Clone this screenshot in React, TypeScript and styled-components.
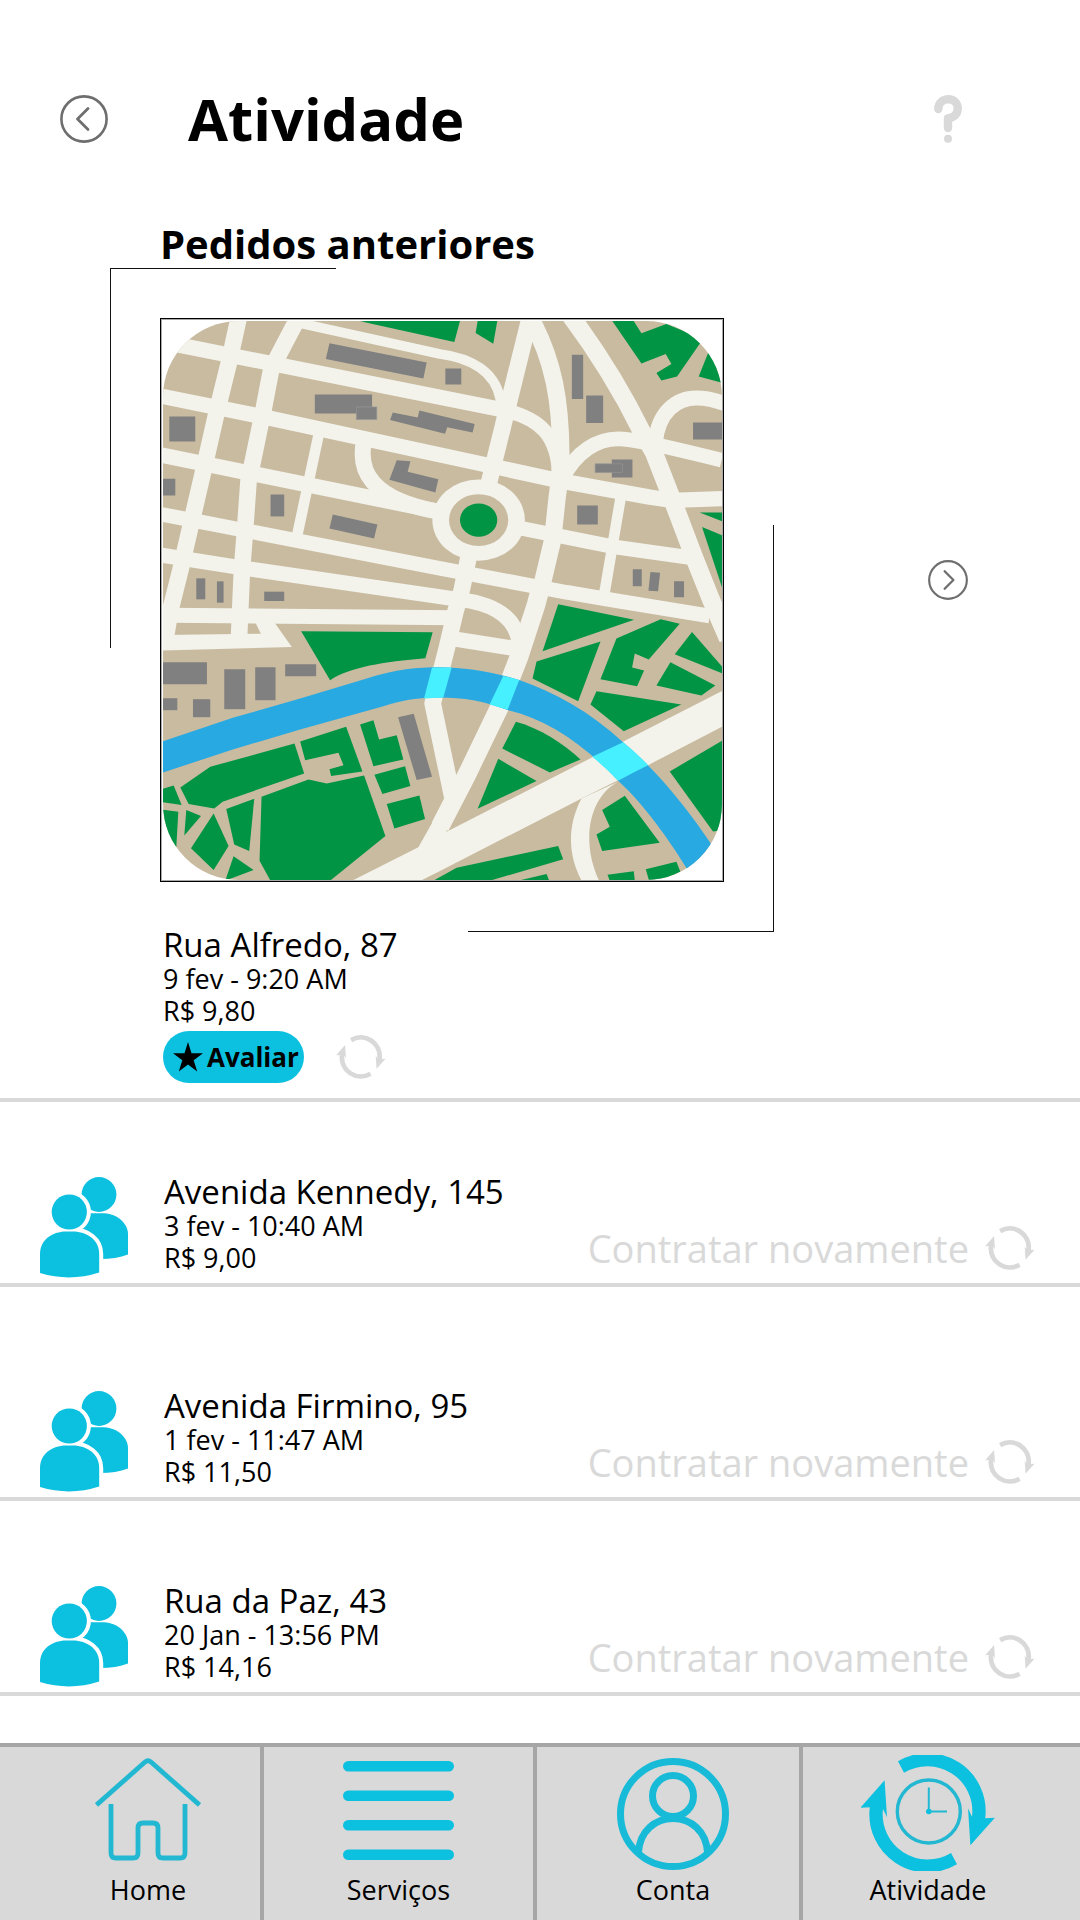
import React from "react";
import styled, { createGlobalStyle } from "styled-components";

const BRAND = "#0cc0df";
const MUTED = "#d9d9d9";

const GlobalStyle = createGlobalStyle`
  *, *::before, *::after { box-sizing: border-box; }
  body { margin: 0; background: #fff; color: #000; font-family: "Open Sans", "Noto Sans", sans-serif; }
  button { font: inherit; color: inherit; background: none; border: 0; padding: 0; cursor: pointer; }
  a { color: inherit; text-decoration: none; }
  h1, h2, h3, p, ul { margin: 0; padding: 0; }
  ul { list-style: none; }
  svg { display: block; flex: none; }
`;

const Screen = styled.div`
  display: flex;
  flex-direction: column;
  min-height: 100vh;
  background: #fff;
`;

const Header = styled.header`
  display: flex;
  align-items: center;
  gap: 80px;
  padding: 79px 118px 0 60px;
`;

const Title = styled.h1`
  flex: 1;
  font-size: 58px;
  line-height: 80px;
  font-weight: 700;
`;

const IconButton = styled.button`
  display: flex;
  flex: none;
`;

const Latest = styled.section`
  padding: 57px 112px 15px 160px;
  border-bottom: 4px solid ${MUTED};
`;

const SectionTitle = styled.h2`
  font-size: 40px;
  line-height: 56px;
  font-weight: 700;
`;

const MapRow = styled.div`
  display: flex;
  align-items: center;
  justify-content: space-between;
  gap: 80px;
  margin: 46px 0 45px;
`;

const MapFrame = styled.div`
  position: relative;
  flex: 0 1 564px;
  border: 1px solid #000;
  padding: 2px 1px 1px 2px;
  box-shadow: inset 0 0 0 1px #a8a8a8;

  &::before,
  &::after {
    content: "";
    position: absolute;
    border: 0 solid #111;
    pointer-events: none;
  }
  &::before {
    top: -51px;
    left: -51px;
    width: 226px;
    height: 380px;
    border-width: 1px 0 0 1px;
  }
  &::after {
    right: -51px;
    bottom: -51px;
    width: 306px;
    height: 407px;
    border-width: 0 1px 1px 0;
  }
`;

const NextSlot = styled.div`
  padding-bottom: 40px;
`;

const Info = styled.div<{ $grow?: boolean }>`
  flex: ${(p) => (p.$grow ? "1" : "none")};
  padding-left: 3px;
`;

const Place = styled.h3`
  font-size: 33px;
  line-height: 36px;
  font-weight: 400;
`;

const Line = styled.p`
  font-size: 27px;
  line-height: 32px;
`;

const Actions = styled.div`
  display: flex;
  align-items: center;
  gap: 32px;
  margin: 4px 0 0 3px;
`;

const RateButton = styled.button`
  display: flex;
  align-items: center;
  gap: 3px;
  height: 52px;
  padding: 0 5px 0 9px;
  border-radius: 26px;
  background: ${BRAND};
  font-size: 26px;
  line-height: 32px;
  font-weight: 700;
`;

const Row = styled.li<{ $space: number }>`
  display: flex;
  align-items: flex-end;
  padding: ${(p) => p.$space}px 45px 5px 40px;
  border-bottom: 4px solid ${MUTED};
`;

const RowBody = styled.div`
  display: flex;
  flex: 1;
  align-items: flex-end;
  padding: 0 0 4px 33px;
`;

const Again = styled.button`
  display: flex;
  align-items: center;
  gap: 16px;
  color: ${MUTED};
  font-size: 38px;
  line-height: 52px;
`;

const Nav = styled.nav`
  display: grid;
  grid-template-columns: 264fr 273fr 266fr 277fr;
  margin-top: auto;
  border-top: 4px solid #a6a6a6;
  background: ${MUTED};
`;

const NavItem = styled.a<{ $left?: number; $right?: number }>`
  display: flex;
  flex-direction: column;
  align-items: center;
  padding: 8px ${(p) => p.$right || 0}px 12px ${(p) => p.$left || 0}px;
  border-right: 4px solid #a6a6a6;
  font-size: 27px;
  line-height: 37px;

  &:last-child { border-right: 0; }
`;

const Chevron = ({ size, dir }: { size: number; dir: "left" | "right" }) => (
  <svg width={size} height={size} viewBox="0 0 48 48" fill="none" stroke="#6e6e6e">
    <circle cx="24" cy="24" r="22.6" strokeWidth="2.6" />
    <path d={dir === "left" ? "M28 13.500L17.500 24L28 34.500" : "M20 13.500L30.500 24L20 34.500"} strokeWidth="2.800" strokeLinecap="round" strokeLinejoin="round" />
  </svg>
);

const Help = () => (
  <svg width="28" height="48" viewBox="0 0 28 48" fill="none" stroke={MUTED}>
    <path d="M4.300 14C4.300 8 9 4.300 14.500 4.300C20 4.300 23.700 8.500 23.700 13.500C23.700 19 20 22.500 14 23.500V33" strokeWidth="8.400" strokeLinecap="round" strokeLinejoin="round" />
    <circle cx="14" cy="43.800" r="4" fill={MUTED} stroke="none" />
  </svg>
);

const HALF = "M37 6.300A58 58 0 0 1 124.200 63.300L133.900 62.700L109.400 90.300L107 53.300L111 61.700A45 45 0 0 0 43 17.700Z";

const Refresh = () => (
  <svg width="50" height="44" viewBox="-1 -2 136 120" fill={MUTED}>
    <path d={HALF} />
    <path d={HALF} transform="rotate(180 66.500 57.800)" />
  </svg>
);

const Star = () => (
  <svg width="32" height="32" viewBox="0 0 32 32" fill="#000">
    <path d="M16 1L19.500 12.300H31L21.700 19.200L25.200 30.500L16 23.600L6.800 30.500L10.300 19.200L1 12.300H12.500Z" />
  </svg>
);

const Users = () => (
  <svg width="88" height="101" viewBox="0 0 88 101" fill={BRAND}>
    <circle cx="59" cy="17.500" r="17.400" />
    <path d="M44 36.300H64C79 37 88 48 88 57V77.500Q76 82 60 82L40 52Z" />
    <g fill="#fff" stroke="#fff" strokeWidth="8">
      <circle cx="29.300" cy="35" r="17.600" />
      <path d="M0 96V77C0 63 12 54.500 26 54.500H33C47 54.500 59.200 63 59.200 77V95.500Q30 105 0 96Z" />
    </g>
    <circle cx="29.300" cy="35" r="17.600" />
    <path d="M0 96V77C0 63 12 54.500 26 54.500H33C47 54.500 59.200 63 59.200 77V95.500Q30 105 0 96Z" />
  </svg>
);

const HomeIcon = () => (
  <svg width="106" height="116" viewBox="0 -3 106 116" fill="none" stroke="#22b8d2" strokeWidth="4.800" strokeLinejoin="round">
    <path d="M1.500 47L50 4Q53 1.500 56 4L104.500 47" />
    <path d="M16 46V95Q16 100 21 100H38Q43 100 43 95V70Q43 65 48 65H58Q63 65 63 70V95Q63 100 68 100H85Q90 100 90 95V46" />
  </svg>
);

const ListIcon = () => (
  <svg width="111" height="116" viewBox="0 0 111 116" fill={BRAND}>
    {[6, 35.5, 65, 94.5].map((y) => (
      <rect key={y} x="0" y={y} width="111" height="10.600" rx="5.300" />
    ))}
  </svg>
);

const AccountIcon = () => (
  <svg width="112" height="116" viewBox="0 -3 112 116" fill="none" stroke="#17bbd8" strokeWidth="7">
    <circle cx="56" cy="56" r="52.500" />
    <circle cx="56" cy="38" r="20.500" />
    <path d="M21.500 94C23 73 38 60.500 56 60.500C74 60.500 89 73 90.500 94" />
  </svg>
);

const ActivityIcon = () => (
  <svg width="134" height="116" viewBox="0 0 134 116" fill={BRAND}>
    <path d={HALF} />
    <path d={HALF} transform="rotate(180 66.500 57.800)" />
    <g fill="none" stroke="#22b8d2">
      <circle cx="67.800" cy="56.500" r="31.500" strokeWidth="3.400" />
      <path d="M67.800 32.500V56.500H86" strokeWidth="2" />
    </g>
    <circle cx="67.800" cy="56.500" r="2.800" />
  </svg>
);

const roads: [number, string][] = [
  [29, "M430 33L870 130C965 142 1035 185 1050 262L1060 300"],
  [46, "M20 90L1065 299"],
  [43, "M1060 298C1165 322 1226 370 1228 500"],
  [46, "M20 254L335 318L1235 512L1500 560L1568 570L1730 564"],
  [46, "M20 431L870 604"],
  [44, "M1100 651L1385 708L1630 743"],
  [44, "M20 609L870 774L1250 846L1400 871L1680 917"],
  [45, "M20 732L280 773L930 868C1030 880 1098 920 1108 1000"],
  [45, "M50 915L920 922"],
  [50, "M268 10L235 160L198 310L163 465L120 650L93 768L55 920L38 1000"],
  [50, "M455 0L383 137L362 182L340 297L305 465L295 510L284 665L275 780L266 990"],
  [32, "M506 370L441 675"],
  [48, "M641 395C625 480 660 565 865 604"],
  [50, "M1140 20L1015 525"],
  [52, "M1135 10C1215 150 1232 280 1233 430L1230 500L1222 560L1208 690L1170 850"],
  [56, "M1170 840L1158 885L1108 1038L1049 1190L950 1395L870 1550"],
  [54, "M1262 15C1370 160 1430 270 1477 365L1512 425L1577 592L1635 745L1685 870L1735 985"],
  [44, "M1240 500C1280 425 1340 385 1405 385C1440 385 1500 396 1716 449"],
  [45, "M1517 395C1525 305 1580 262 1640 262C1670 262 1700 269 1730 281"],
  [32, "M1412 565L1364 848"],
  [50, "M956 740L935 840L916 905L890 1015L848 1180L908 1465"],
  [46, "M895 983L1105 1016"],
];

const greens = [
  "M630 32L913 94L933 20Z",
  "M985 20H1044L1030 99L977 67Z",
  "M1380 20H1445L1475 68L1550 40L1660 85L1582 198L1535 210L1520 187L1565 160L1548 130L1475 159Z",
  "M1678 120L1730 220L1647 198Z",
  "M1650 606H1730V638Z",
  "M1657 650L1730 680V870Z",
  "M453 963L848 966L826 1044C700 1055 600 1070 540 1110Z",
  "M30 1438L70 1426L94 1485L30 1475Z",
  "M90 1432L180 1370L433 1300L462 1390L217 1475L192 1495L115 1482Z",
  "M450 1294L588 1250L637 1384L543 1398L538 1377L580 1365L565 1328L465 1350Z",
  "M630 1243L670 1230L687 1288L740 1275L760 1348L670 1368Z",
  "M673 1394L765 1368L781 1428L697 1452Z",
  "M710 1482L808 1456L825 1527L733 1555Z",
  "M334 1460L475 1408L530 1420L642 1396L706 1578L530 1720H365L328 1652Z",
  "M228 1497L312 1466L297 1623L252 1603Z",
  "M190 1510L235 1608L190 1680L122 1615Z",
  "M108 1500L152 1518L102 1576Z",
  "M30 1498L84 1505L78 1610L30 1600Z",
  "M250 1639L310 1680L225 1712Z",
  "M1225 882L1453 928L1178 1023Z",
  "M1352 994L1285 1173L1148 1105L1160 1054Z",
  "M1533 927L1590 940L1497 1048L1455 1030L1447 1072L1483 1081L1462 1128L1352 1107L1400 985Z",
  "M1627 965L1720 1072V1090L1575 1032Z",
  "M1562 1056L1697 1126L1655 1156L1520 1126Z",
  "M1340 1143L1595 1183L1422 1263L1322 1183Z",
  "M1098 1235C1170 1255 1240 1300 1292 1348L1200 1387L1057 1315Z",
  "M1045 1346L1160 1413L983 1496Z",
  "M1720 1290V1560L1690 1564L1560 1384Z",
  "M1425 1457L1530 1598L1357 1623L1340 1573L1380 1550L1357 1500Z",
  "M850 1712L920 1673L1225 1608L1240 1648L1020 1712Z",
  "M1105 1712L1190 1692L1198 1712Z",
  "M1373 1694L1452 1684L1455 1712H1380Z",
  "M1488 1678L1580 1655L1592 1685L1530 1712H1498Z",
];

const buildings = [
  "M538 98L830 156L820 204L527 145Z",
  "M494 252H666V309H494Z",
  "M728 306L803 321L808 300L974 340L968 366L892 350L885 370L720 328Z",
  "M57 318H135V393H57Z",
  "M30 505H75V555H30Z",
  "M361 552H402V618H361Z",
  "M548 612L682 642L672 684L538 654Z",
  "M740 449L781 452L773 484L865 506L856 546L718 508Z",
  "M138 804H165V867H138Z",
  "M200 813H220V877H200Z",
  "M342 844H402V872H342Z",
  "M886 174H934V222H886Z",
  "M1266 132H1300V265H1266Z",
  "M1309 255H1360V337H1309Z",
  "M1630 336H1720V387H1630Z",
  "M1386 447H1448V501H1386Z",
  "M1282 585H1344V642H1282Z",
  "M1449 777H1476V828H1449Z",
  "M1502 785L1531 787L1525 843L1496 841Z",
  "M1573 813H1603V861H1573Z",
  "M30 1056H170V1122H30Z",
  "M30 1164H81V1200H30Z",
  "M128 1167H180V1221H128Z",
  "M222 1077H285V1197H222Z",
  "M315 1071H376V1170H315Z",
  "M405 1062H498V1098H405Z",
  "M744 1221L791 1211L846 1400L800 1410Z",
];

const CityMap = () => (
  <svg width="100%" viewBox="38 31 1679 1679" role="img" aria-label="Mapa do trajeto">
    <defs>
      <clipPath id="map-shape">
        <rect x="38" y="31" width="1679" height="1679" rx="228" />
      </clipPath>
    </defs>
    <g clipPath="url(#map-shape)">
      <rect x="38" y="31" width="1679" height="1679" fill="#c8bba0" />
      <g fill="none" stroke="#f3f2eb" strokeLinejoin="round">
        {roads.map(([w, d]) => (
          <path key={d} d={d} strokeWidth={w} />
        ))}
      </g>
      <g fill="#f3f2eb">
        <path d="M38 974L332 970L312 930H368L425 1010L38 1021Z" />
        <path d="M38 880L85 900L73 974L38 1000Z" />
        <path d="M1720 1141L890 1565L882 1475L805 1612L600 1715H806L870 1683L1295 1465L1495 1365L1720 1248Z" />
        <path d="M1295 1465C1250 1550 1255 1640 1297 1715H1349C1290 1590 1320 1460 1405 1415Z" />
        <ellipse cx="986" cy="629" rx="139" ry="122" />
      </g>
      <ellipse cx="986" cy="629" rx="89" ry="78" fill="#c8bba0" />
      <g fill="#009444">
        <ellipse cx="986" cy="629" rx="56" ry="50" />
        {greens.map((d) => (
          <path key={d} d={d} />
        ))}
      </g>
      <g fill="#808080">
        {buildings.map((d) => (
          <path key={d} d={d} />
        ))}
        <path d="M619 289H680V327H619Z" stroke="#969696" strokeWidth="2" />
        <path d="M1336 460H1418V486H1336Z" stroke="#969696" strokeWidth="2" />
      </g>
      <path
        fill="#29a9e1"
        d="M30 1296L250 1222L450 1165L650 1105C740 1076 800 1071 870 1071C940 1071 1030 1084 1110 1110C1210 1144 1320 1204 1420 1296C1520 1380 1610 1490 1690 1610L1620 1690C1560 1590 1480 1480 1405 1412C1300 1300 1190 1227 1075 1200C1000 1172 940 1162 870 1162C800 1162 760 1170 700 1188L450 1258L250 1317L30 1390Z"
      />
      <g fill="#47f0ff">
        <path d="M846 1072L905 1072L880 1162L822 1165Z" />
        <path d="M1060 1097L1108 1109L1073 1199L1019 1183Z" />
        <path d="M1420 1296Q1460 1328 1495 1365Q1440 1392 1405 1412Q1370 1374 1327 1340Z" />
      </g>
    </g>
  </svg>
);

const orders = [
  { place: "Avenida Kennedy, 145", date: "3 fev - 10:40 AM", price: "R$ 9,00", space: 72 },
  { place: "Avenida Firmino, 95", date: "1 fev - 11:47 AM", price: "R$ 11,50", space: 101 },
  { place: "Rua da Paz, 43", date: "20 Jan - 13:56 PM", price: "R$ 14,16", space: 82 },
];

export default function App() {
  return (
    <Screen>
      <GlobalStyle />
      <Header>
        <IconButton aria-label="Voltar">
          <Chevron size={48} dir="left" />
        </IconButton>
        <Title>Atividade</Title>
        <IconButton aria-label="Ajuda">
          <Help />
        </IconButton>
      </Header>

      <main>
        <Latest>
          <SectionTitle>Pedidos anteriores</SectionTitle>
          <MapRow>
            <MapFrame>
              <CityMap />
            </MapFrame>
            <NextSlot>
              <IconButton aria-label="Próximo pedido">
                <Chevron size={40} dir="right" />
              </IconButton>
            </NextSlot>
          </MapRow>
          <Info>
            <Place>Rua Alfredo, 87</Place>
            <Line>9 fev - 9:20 AM</Line>
            <Line>R$ 9,80</Line>
          </Info>
          <Actions>
            <RateButton>
              <Star />
              Avaliar
            </RateButton>
            <IconButton aria-label="Contratar novamente">
              <Refresh />
            </IconButton>
          </Actions>
        </Latest>

        <ul>
          {orders.map((o) => (
            <Row key={o.place} $space={o.space}>
              <Users />
              <RowBody>
                <Info $grow>
                  <Place>{o.place}</Place>
                  <Line>{o.date}</Line>
                  <Line>{o.price}</Line>
                </Info>
                <Again>
                  Contratar novamente
                  <Refresh />
                </Again>
              </RowBody>
            </Row>
          ))}
        </ul>
      </main>

      <Nav>
        <NavItem href="#home" $left={36}>
          <HomeIcon />
          Home
        </NavItem>
        <NavItem href="#servicos">
          <ListIcon />
          Serviços
        </NavItem>
        <NavItem href="#conta" $left={10}>
          <AccountIcon />
          Conta
        </NavItem>
        <NavItem href="#atividade" $right={27}>
          <ActivityIcon />
          Atividade
        </NavItem>
      </Nav>
    </Screen>
  );
}
